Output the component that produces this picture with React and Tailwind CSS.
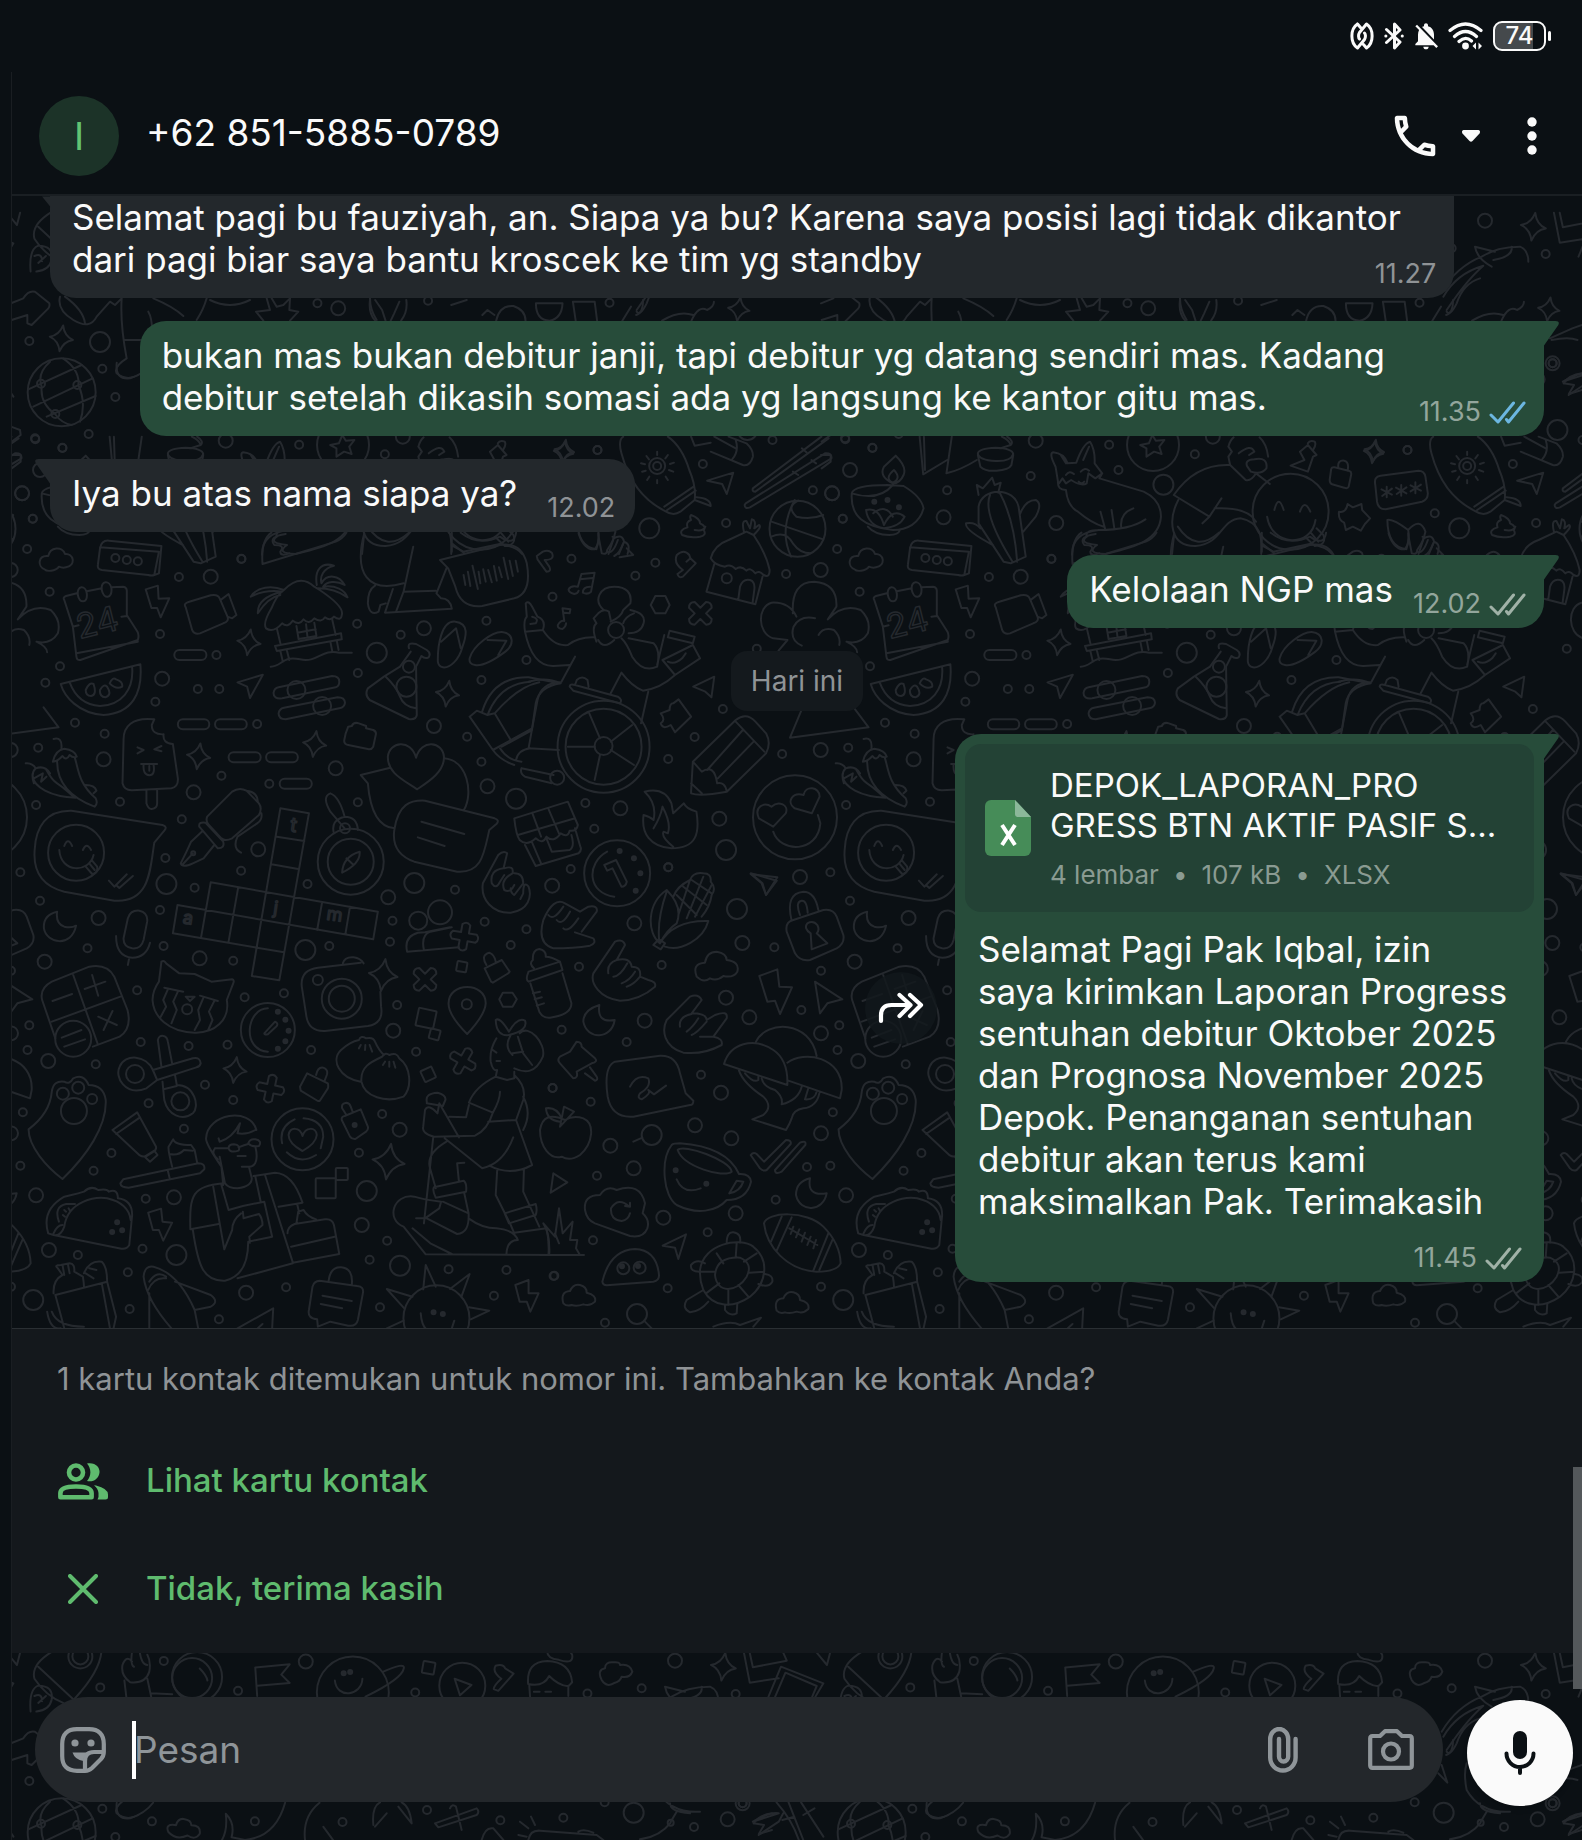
import React from "react";
import { MdNotificationsOff, MdOutlineCall } from "react-icons/md";

/* ---------- Wallpaper doodles ---------- */

// Each sheet holds drawings on its own grid: page = origin + point / scale.
const SHEETS = [
  {
    ox: 0, oy: 520, sx: 2.8, sy: 3,
    small: [[76,87],[139,215],[501,171],[676,117],[448,342],[606,405],[1000,311],[1122,344],[1362,302],[1547,230],[1474,420],[1348,480],[1002,459],[168,439],[127,488],[435,545],[554,507],[614,507],[210,608],[293,641],[107,683],[720,612],[1308,650],[1348,725],[620,767],[754,791],[1002,847],[101,855],[336,845],[509,898],[57,1057],[463,1014],[675,1052],[861,1092],[545,1103],[112,1142],[448,1170],[1274,1109]],
    mid: [[590,170],[290,718],[542,817],[454,476],[1187,325],[1215,618],[940,745],[1365,799],[723,988],[1087,1132]],
    large: [[1055,398],[1445,836],[466,1092],[1160,1089]],
    rings: [[323,114,4],[355,120,4],[386,124,4],[1145,440,6],[1138,500,10],[830,510,9],[902,558,9],[213,998,28],[982,1025,33],[982,1025,23],[966,925,5],[541,1000,2]],
    stars: [[697,367,13],[1253,521,13],[881,672,13],[556,709,13]],
    pills: [[488,578,405],[498,586,613],[602,691,613],[640,730,712],[745,834,712],[783,873,791]],
    texts: [[280,342,"24",34,-14],[820,935,"t",20,8],[770,1182,"j",18,8],[524,1212,"a",18,8],[935,1202,"m",18,8]],
    d: "M125 148C105 140 105 105 135 108C140 80 175 78 182 102C205 98 215 135 185 142C175 145 165 140 165 140C155 155 130 155 125 148ZM280 82L445 95L432 165Q425 168 415 165L285 150Q272 148 274 135L280 85Q284 60 305 62L452 78L445 160L432 165M180 240Q175 232 185 228L215 220M243 214L285 205M312 202L345 200Q355 202 355 212L355 285L385 335Q390 345 386 360L225 420Q215 422 214 410L204 320L180 240M204 320L220 316M340 290L355 288M214 400L386 365M218 225C214 195 240 195 243 220C246 250 222 252 218 225M285 210C281 180 308 180 312 205C315 238 290 238 285 210M408 208L442 197L444 236L474 235L450 292L440 264L424 264ZM520 262Q512 250 530 245L590 226Q610 222 615 235L637 290Q642 305 625 310L560 340Q545 345 538 330ZM620 238L640 222L662 285L650 295L637 290M665 487L736 464L700 534L692 500ZM745 325Q735 310 760 265Q775 225 795 210Q840 160 880 200L895 210Q965 260 957 285Q955 305 935 290Q925 305 910 292Q900 310 880 295Q865 315 850 298Q838 318 820 302Q805 325 790 310Q765 340 745 325M775 325L785 370M930 298L940 345M770 378L955 340L957 358L775 393ZM785 393L792 425M803 390L810 420M925 365L930 392M943 362L948 390M758 440C790 440 790 405 840 418C890 430 900 385 950 398L985 398M830 318L836 357L886 348L880 308M833 338L884 328M857 313L861 352M887 195C880 150 900 125 935 137C905 145 895 170 900 190C915 160 950 165 965 195C940 180 915 185 905 200C940 195 965 210 973 232C950 215 920 205 890 205M795 210C760 195 720 200 702 230C730 215 760 210 790 215C750 225 720 245 722 280C740 250 760 230 785 225M735 132Q730 60 760 38M735 132L940 65Q960 55 970 38M800 42Q750 50 768 75Q800 75 785 95Q785 110 810 100M1020 40C990 160 1030 220 1130 190M1157 80L1130 215L1220 212M1030 20Q1080 100 1145 38M1130 215L1110 272M1100 207L1078 278L1265 266Q1260 235 1235 235L1222 220L1250 145M1050 197Q1030 210 1030 250Q1035 290 1060 275L1065 255L1080 250M1265 38L1265 95M1265 70L1300 100M1290 38Q1340 80 1400 50Q1440 80 1445 38M1232 120L1400 75Q1460 65 1475 130Q1490 220 1440 235L1350 258Q1290 265 1275 200L1255 145ZM1298 165L1303 195M1310 155L1317 198M1323 137L1338 207M1340 155L1345 190M1353 148L1360 185M1367 150L1377 187M1383 138L1391 182M1397 142L1405 172M1410 113L1423 177M1427 122L1436 168M1444 122L1450 155M1505 118L1530 155Q1545 155 1538 140L1525 120Q1555 120 1545 98Q1535 88 1520 95L1503 108ZM1145 385Q1140 365 1165 372L1195 390Q1208 400 1200 412Q1190 418 1180 408L1165 440L1167 585Q1165 600 1145 597L1035 540Q1020 525 1030 505L1075 470L1120 440L1150 395M1080 470Q1110 500 1120 530Q1130 560 1165 565M1226 425C1225 380 1235 300 1275 305C1315 310 1305 350 1295 380C1285 420 1260 445 1240 442Q1228 440 1226 425ZM1235 365L1277 325L1290 385M1315 415C1325 375 1380 335 1405 336C1440 340 1440 375 1415 395C1390 415 1355 440 1330 435Q1312 432 1315 415ZM1365 360L1418 362L1395 405M170 492L393 433C400 520 370 580 290 585C220 580 180 530 170 492ZM195 487C210 530 240 555 280 558C340 555 375 510 370 442M240 510Q250 485 262 492Q272 525 255 528Q240 528 240 510ZM280 510Q290 490 300 500Q315 525 295 532Q278 530 280 510ZM307 490Q315 470 325 478Q345 485 342 500Q325 510 307 490ZM780 502L930 468Q950 468 950 485Q950 498 940 502L790 535Q765 538 766 518Q768 505 780 502ZM795 563L945 532Q965 532 966 548Q965 562 950 565L800 598Q780 598 780 580Q782 566 795 563ZM432 598C370 590 345 620 346 660L343 790Q348 812 370 811L480 805Q500 800 498 775L484 672Q455 670 458 643Q425 645 425 615ZM410 812L410 850Q415 868 425 867Q440 866 440 850L440 808M385 682L402 690L385 700M452 678L432 688L452 694M395 732L440 732M402 735Q400 765 418 766Q435 765 430 735M418 738L418 752M150 657Q175 650 172 685M148 725Q155 690 180 686Q210 690 215 710Q205 715 195 705Q185 725 175 708Q160 725 148 725ZM160 725C160 780 190 830 265 860Q275 850 268 835C220 790 220 750 210 715M72 730Q90 728 100 745Q125 735 140 760M100 745Q85 760 95 790M130 750Q145 780 160 790C190 810 200 830 212 833C140 830 95 800 92 770M95 775L120 760L115 785L130 770M240 795Q265 795 270 812L262 820M968 640L975 620L985 618Q990 605 1005 610L1025 618L1025 625L1045 630Q1055 635 1052 645L1045 680Q1040 690 1030 687L975 675Q962 672 964 660ZM200 872L455 915Q470 920 460 932L432 968C420 1050 420 1150 320 1142L180 1115Q90 1090 97 990C100 920 130 870 200 872ZM180 978Q190 950 202 978M232 990Q242 965 255 990M166 990C170 1060 250 1060 262 1005M240 1040L258 1062Q275 1060 272 1040L258 1022M250 1030L265 1050M305 1082L320 1100L355 1063M328 1098L334 1104L372 1068M580 890L650 815Q670 800 690 812L725 850Q735 865 725 885L650 955Q630 965 620 955L585 915Q575 905 580 890ZM690 812Q720 815 722 845M732 880Q735 900 720 910L665 950Q650 985 675 998M558 920Q555 905 575 908L625 965Q630 985 610 985ZM565 935L535 965Q525 990 506 1030Q510 1045 540 1030L570 1015L600 975M510 1035L540 1000M785 865L865 880L782 1381L705 1368ZM775 950L852 963M760 1033L835 1047M497 1155L1045 1258L1058 1175L590 1087L563 1252M497 1155L484 1240L795 1297M667 1102L640 1265M902 1146L888 1230M980 1160L967 1243M935 940Q925 900 965 890Q1000 890 1002 930M965 925L925 875Q900 830 925 820Q950 830 965 890M958 1058Q960 1010 1007 995Q1010 1030 958 1058ZM970 1015L990 1035M1168 808C1130 780 1085 760 1086 710C1090 665 1150 655 1165 713C1180 655 1240 665 1243 710C1245 755 1200 785 1168 808ZM1090 744L1010 765L1030 790Q1040 920 1105 925M1243 715C1310 720 1325 820 1300 868M1190 842L1385 895Q1400 900 1390 912L1370 930C1355 1000 1350 1060 1280 1055L1160 1025Q1095 1000 1104 930C1115 850 1150 840 1190 842ZM1180 905L1300 942M1170 952L1245 978M1420 1000Q1410 990 1395 1005L1352 1090C1345 1140 1380 1180 1430 1178C1480 1170 1490 1130 1480 1100Q1465 1080 1465 1120L1457 1137M1420 1000L1410 1045Q1370 1050 1377 1090Q1390 1110 1400 1085L1412 1065M1412 1045Q1440 1035 1435 1060Q1400 1080 1412 1110Q1430 1120 1440 1095M1440 1060Q1465 1060 1465 1090L1440 1125Q1430 1120 1430 1105M1350 575Q1380 470 1480 472L1568 490M1365 585Q1400 490 1485 485M1315 590L1335 572L1365 585L1385 580Q1450 500 1510 487M1315 590L1380 690L1490 625L1505 540Q1515 490 1568 487M1385 580L1430 660M1380 690Q1400 720 1440 735",
  },
  {
    ox: 0, oy: 900, sx: 2.8, sy: 3,
    small: [[245,145],[458,138],[653,182],[922,138],[1099,62],[1092,125],[1357,65],[1474,88],[1430,135],[384,271],[82,376],[77,450],[268,493],[394,426],[528,438],[637,434],[685,292],[795,280],[871,450],[1112,315],[1165,455],[574,554],[416,610],[653,600],[64,637],[515,686],[312,759],[57,797],[262,812],[1070,642],[1005,758],[408,896],[218,1065],[399,1046],[358,1117],[363,1227],[801,1162],[613,1258],[1035,1079],[1084,1022],[1256,1108],[1064,1222],[1383,1187],[1418,1110],[1547,564],[1550,1128]],
    mid: [[276,54],[125,185],[559,175],[135,483],[1101,392],[1119,689],[101,886],[487,892],[1013,975],[137,1050],[689,1178]],
    large: [[855,150],[494,1065],[1120,1097],[93,1200],[1027,873]],
    rings: [[205,416,18],[524,328,5],[750,390,27],[957,296,20],[957,296,13],[890,240,5],[1171,62,9],[1232,37,12],[1307,313,5],[378,522,9],[505,604,9],[207,633,13],[176,581,6],[219,563,6],[258,597,5],[847,718,31],[1222,1255,33]],
    dots: [[778,335],[799,359],[808,392],[799,424],[778,446],[993,675],[328,967],[342,991],[314,996],[1214,1237],[1240,1242]],
    stars: [[1073,225,16],[1088,785,18],[658,510,13]],
    crosses: [[1300,110,10],[1190,238,45],[757,566,12],[1296,483,30]],
    squares: [[1293,200,5,10],[1193,355,9,12],[1217,403,5,15],[1199,523,6,-25],[912,865,10,0],[957,822,6,0]],
    d: "M160 35Q120 45 123 85C130 130 200 145 213 77Q200 85 180 80Q155 70 160 35ZM358 55Q365 30 390 32Q415 38 412 65L402 120Q395 148 370 145Q345 140 346 115ZM325 108Q325 170 370 173Q410 172 420 128M362 173L358 195M118 300Q110 265 145 245L250 200Q300 190 320 230L357 330Q370 385 335 410L260 440M118 300L155 415M205 225L273 430M145 365L337 290M147 303L202 282M237 267L295 245M258 225L275 287M275 350L327 375M315 333L290 390M173 413L228 390M180 440L238 418M452 185Q460 180 465 190L502 220L545 222L592 245L650 238Q657 240 653 250L635 300C645 360 600 400 545 398C470 395 430 350 427 300Q428 270 445 245ZM460 263L513 275M560 287L610 303M470 268L457 300L465 320L450 350M498 275L485 305L495 330L480 370M570 292L555 330L560 360L545 390M600 303L585 335L595 360L583 390M520 290L545 290L532 303ZM750 325C690 325 675 450 750 455M740 400L770 365Q780 370 775 378L750 403Q740 405 740 400ZM845 260Q840 210 890 203L1010 188M845 260L858 350Q865 395 910 393L1030 378Q1075 370 1067 320L1065 275M960 190Q965 170 990 172Q1010 175 1018 190M1140 155Q1130 110 1170 98L1190 97L1260 82M1140 155L1285 142M1187 150Q1178 105 1205 95L1265 82M1357 205L1405 180L1427 215Q1425 220 1420 222L1380 248L1375 245ZM1362 195Q1345 165 1370 158Q1385 165 1388 185M840 560L860 520L918 550Q920 560 918 565L895 603L890 603L842 572ZM885 525Q890 500 905 503Q920 508 915 525L908 545M957 660Q955 650 965 648L1010 628L1030 680Q1032 690 1025 695L995 717Q985 718 980 710ZM970 645L958 625Q955 610 970 608Q980 610 982 620L988 637M1308 402Q1255 345 1256 310C1256 245 1360 245 1360 310Q1358 345 1308 402ZM1398 298L1408 278L1435 278L1447 298L1435 320L1408 320ZM1480 215Q1470 240 1480 245L1575 210M1480 215L1568 185M1495 205Q1480 190 1492 180Q1490 150 1510 147Q1530 152 1528 170Q1545 170 1568 185L1575 210M1485 250L1510 335Q1520 355 1540 353Q1600 345 1600 310L1575 220M1492 280L1512 275M1497 298L1517 292M1503 317L1523 310M440 540L410 565C350 590 320 530 335 500C350 460 410 465 428 510L540 475Q560 470 562 490Q560 500 550 502L440 540M428 510L440 540M442 420Q445 405 458 408Q468 410 470 425L482 490M442 420L452 500M490 525L495 555C545 555 560 620 540 640C510 665 470 645 460 600L455 545M458 568L495 558M1010 545C950 535 925 480 955 450Q980 425 1005 420Q1010 405 1025 415Q1045 410 1050 425Q1060 450 1075 465M1070 470Q1080 455 1090 465Q1110 455 1118 475C1150 500 1155 560 1130 590C1080 610 1020 590 1012 545C1008 500 1040 485 1070 470ZM1010 435L1005 445M1023 435L1022 450M1035 435L1042 455M1078 485L1072 495M1090 485L1090 500M1102 485L1107 503M80 688Q140 640 145 575Q150 540 180 545Q195 555 205 535Q235 520 248 555Q290 555 296 600C300 680 240 770 175 837C130 800 80 740 80 688ZM315 690L384 637L437 740Q438 750 430 755L408 770Q395 770 390 765ZM325 702L392 652M405 770L432 752L441 765L420 785ZM345 838L555 790Q575 790 572 808L560 820L360 863Q338 862 337 850ZM470 812L475 835M482 800Q470 750 472 740L485 718Q490 735 535 735L545 750L552 788M475 762Q500 768 515 750L540 752M847 753Q808 730 808 705C812 680 840 680 847 708C855 680 885 680 887 705Q885 730 847 753ZM825 658Q780 680 790 730M850 655Q905 660 905 710L898 745M803 757Q840 795 885 765M135 1000Q115 930 180 890L200 885Q220 880 235 875Q255 855 275 870Q300 865 305 875Q330 865 330 895Q370 900 370 945L362 1035Q355 1048 340 1046L150 1005Q170 1010 180 980C190 900 270 890 300 895Q360 910 366 960M150 1005L135 1000M165 965Q150 920 185 912L210 912M150 1000Q160 975 175 975M180 930L185 935M176 945L182 950M192 925L196 932M415 938L451 926L455 965L482 968L457 1022L445 990L428 990ZM625 855L620 800Q575 730 577 715C580 640 700 620 718 690L715 690Q690 705 665 700L672 670Q650 715 615 725L612 715M602 745Q590 760 610 778M615 770L630 850Q640 865 665 865Q705 860 705 835L697 800L677 800M697 800C720 800 722 770 715 740M602 745L640 745M640 745Q640 733 655 733Q675 735 668 752Q645 760 640 745ZM695 730Q700 715 715 718Q735 722 725 738Q705 742 695 730M668 742Q685 735 695 732M665 768L688 768M625 850C540 860 530 880 533 988L612 972M540 990C555 1100 570 1145 630 1142C680 1130 695 1080 695 1025L762 1010L740 905L680 918L640 930L620 855M597 860L628 1048L650 990Q650 960 675 940M710 828L770 818Q820 820 847 908L780 920M715 830L730 905M742 825L820 1088L950 1062L935 975Q930 955 910 958L825 972Q805 980 805 1000M815 1040L937 1010M665 1135L820 1090M680 935L682 955L725 942Q735 955 735 975L698 1010L700 1028M830 970L835 935L850 930Q860 950 885 958M832 912L838 940M1455 400C1480 370 1530 430 1520 470C1500 520 1470 520 1440 505M1425 405Q1390 410 1388 360Q1400 350 1425 395Q1450 350 1470 362Q1480 390 1425 405M1390 415Q1370 450 1374 485Q1380 515 1392 510L1388 530L1420 540L1440 535L1440 515M1430 405Q1410 440 1435 465M1450 410L1465 460L1490 495M1465 455L1435 460M1380 450L1390 458M1390 483L1400 483M1388 530Q1330 560 1313 608L1380 638Q1400 600 1400 575M1440 525Q1475 560 1465 600L1445 660L1367 665M1465 590Q1490 640 1465 690M1445 660L1490 795Q1430 830 1370 797M1313 615L1305 652L1258 650M1380 638Q1365 690 1330 707L1215 710Q1180 700 1185 680L1190 630Q1200 610 1225 640L1230 610L1285 712M1195 605Q1190 580 1225 578Q1250 585 1247 600L1240 618L1195 610ZM1245 715L1350 805Q1410 790 1437 712M1250 725Q1195 760 1203 800L1220 865M1280 790L1285 845M1215 862Q1210 870 1220 893L1305 875Q1308 850 1298 842ZM1213 712L1187 970M1280 790L1300 788M1240 905L1312 940Q1315 1000 1280 1002L1195 955L1165 955M1300 880L1312 940M1190 955L1230 925L1235 905Q1190 900 1160 890C1100 880 1080 960 1130 980L1192 1063L1568 1065M1155 985L1205 1030L1265 1062M1312 955Q1350 985 1390 985Q1440 990 1450 1020Q1420 1020 1418 1062M1392 812L1388 885L1430 975L1440 1000M1467 808L1465 875L1510 980M1413 940L1500 912Q1505 930 1500 945L1425 970ZM1440 998L1530 985Q1538 1020 1536 1062M150 1180Q148 1140 175 1125L162 1105Q150 1095 170 1095L195 1090Q210 1090 208 1115L232 1130Q235 1150 235 1160M175 1095L180 1125M190 1092L195 1120M155 1185L300 1145M155 1185L180 1285M285 1150L308 1285M300 1145L325 1250L318 1285M235 1120Q250 1080 285 1085Q300 1100 300 1145M250 1105L270 1110M240 1120L262 1135M132 1235Q140 1290 170 1285M145 1235Q160 1280 235 1280M402 1130Q405 1095 430 1100Q500 1120 545 1230L555 1285M402 1130Q410 1200 480 1285M415 1170Q430 1130 465 1135M418 1145Q440 1110 465 1130M490 1145L590 1185Q615 1205 590 1220L545 1230M418 1180L418 1285M665 1285L765 1225L762 1285M722 1285L735 1272M875 1160Q880 1140 900 1143L1000 1158Q1020 1160 1016 1180L1002 1260Q998 1280 975 1277L925 1265L890 1280L888 1258Q860 1255 865 1230ZM920 1143Q925 1100 955 1102Q990 1105 985 1155M903 1187L985 1203M898 1212L958 1225M1185 1168L1192 1095L1220 1160M1260 1167L1315 1122L1292 1190M1313 1222L1370 1232L1318 1258M1155 1190L1083 1167L1132 1225M1130 1262L1083 1285M1178 1240Q1180 1275 1195 1290M1272 1262L1265 1285M1443 1155L1480 1140L1480 1180L1508 1180L1485 1235L1475 1205L1455 1205Z",
  },
  {
    ox: 500, oy: 420, sx: 2.8, sy: 3,
    small: [[273,90],[568,132],[763,60],[876,211],[960,296],[1043,84],[1252,211],[1486,168],[967,58],[200,416],[435,428],[379,467],[633,309],[801,462],[719,686],[624,867],[545,951],[471,1017],[790,1002],[239,1149],[264,1226],[198,1347],[471,1342]],
    mid: [[930,220],[980,150],[1242,292],[1500,62],[898,450],[337,1165],[614,1196],[146,1397],[898,990]],
    large: [[418,325],[633,1290]],
    rings: [[440,138,8],[440,138,4],[833,326,28],[635,475,5],[325,630,8],[290,980,46],[290,980,38],[290,978,9],[160,1073,7],[826,1192,42],[328,1360,33]],
    dots: [[1048,245],[1085,240],[1117,262],[335,1293],[375,1315],[393,1360],[380,1412]],
    stars: [[180,92,11]],
    crosses: [[561,580,45]],
    d: "M345 50Q330 60 340 100C360 180 400 240 460 272Q485 290 505 275L545 240Q550 200 530 150Q510 80 470 50M460 260L542 200M468 270L548 212M550 232Q590 235 590 258L545 240M440 95L440 105M410 108L417 118M395 130L406 133M398 155L408 152M412 180L418 170M440 190L440 180M470 180L464 170M485 155L473 150M487 128L476 132M470 105L463 115M535 50L545 77L590 68M600 50L660 85M590 95L680 135Q700 140 708 110Q710 90 690 70L640 50M650 118Q670 95 660 60M580 182L653 158L635 222L622 192ZM708 205L900 50M715 215L920 55M708 205Q705 215 715 215M688 250L910 100Q930 98 928 115L700 262Q685 268 685 255ZM845 85L858 97M820 155L835 165M872 120L885 130M760 305L905 358M825 240Q780 330 815 410M835 242Q800 260 830 290Q870 300 905 285M760 350Q800 330 820 370Q840 400 870 400M985 220Q990 195 1085 195L1130 198Q1180 230 1186 265C1175 310 1140 330 1100 330C1020 320 980 290 985 220M985 220Q1060 245 1100 195M1100 190Q1060 170 1075 140L1108 107Q1140 140 1130 165Q1120 190 1100 190ZM1100 188Q1075 175 1103 150Q1125 175 1100 188M1025 270Q1060 260 1075 315Q1100 260 1133 290Q1120 320 1075 325Q1030 315 1025 270M1045 280Q1080 250 1100 290M1030 320Q1050 345 1090 345Q1115 345 1120 330M1175 50L1185 163L1252 120M1187 50L1190 150M1265 50L1250 160Q1290 150 1335 120M1405 50Q1425 60 1430 75L1400 85M1420 50Q1440 65 1430 75M1338 100Q1340 85 1388 83Q1435 85 1437 102Q1430 125 1388 123Q1340 120 1338 100ZM1338 105L1345 140Q1360 155 1390 152Q1425 150 1432 135L1437 105M1340 260C1350 200 1440 200 1452 260L1472 410L1430 430L1410 425L1340 310ZM1372 225Q1350 280 1435 425M1400 220Q1440 300 1448 425M1340 225L1335 195L1352 205L1378 173L1385 195L1402 188L1395 218M1305 310Q1300 330 1380 375M1305 310Q1330 305 1345 325M1455 285Q1470 240 1500 240Q1520 250 1500 290L1465 335M510 345Q500 330 525 322Q520 305 535 300Q530 290 535 285Q560 295 560 310Q580 320 570 330Q580 345 560 350Q530 355 510 345ZM545 330Q570 335 575 320M590 415Q600 375 640 360L690 335L710 345Q745 400 755 450Q755 475 738 465Q725 450 715 460Q700 440 690 452Q675 435 660 447Q645 430 630 440Q600 435 590 415ZM600 432L578 515L715 553L735 470M667 540L672 500Q680 475 700 480Q715 485 712 510L707 550M683 335Q675 300 690 303L700 325L705 298Q718 300 712 325L725 315Q735 320 710 345M220 340Q235 390 265 388Q280 370 275 340M275 345L285 400Q300 405 300 390Q325 350 315 350M300 395Q315 405 330 360M320 408Q335 400 345 370M335 412L373 405L355 385M497 462Q500 475 512 470L548 430L533 415L522 425M512 450L497 462M512 450Q485 430 495 405Q515 385 530 405L533 415M220 512Q218 520 208 522Q192 518 192 508Q198 495 218 500L228 462L265 458L255 515Q245 525 232 518Q232 500 252 500M224 478L260 474M185 610Q185 620 175 627Q160 625 162 615Q170 600 180 603L175 565L197 568L195 580L180 578M422 555L435 528L463 528L475 555L463 580L435 580ZM72 550Q80 540 90 560L105 590Q130 600 120 630L70 635Q65 600 75 590ZM70 635Q90 740 150 738L195 735M120 630Q150 680 190 675Q220 650 265 652M90 590Q110 595 100 610L85 612M270 665Q255 620 270 610L262 595L275 580Q290 565 305 575L310 600M290 570C260 540 280 500 320 500C355 500 370 520 365 550M365 570Q410 580 402 610Q395 640 360 640M310 605Q340 590 345 570L365 550M345 610Q350 590 375 580M275 660Q290 690 320 660M360 655L430 670Q450 690 440 740Q400 760 370 710Q355 670 340 655M210 710L172 785M310 820L340 758Q370 800 400 812Q450 805 490 765M440 735L460 645M475 632L545 650L540 670L470 652ZM455 720L490 765L560 715L540 675ZM470 725Q490 735 510 715L520 700M415 815L395 910M190 980L265 980M250 880L280 955M370 915L310 965M310 990L375 1035M280 1005L265 1080M90 925L80 985L165 990M5 980L90 930M0 985Q20 1020 60 1025M45 1020Q50 990 85 985M60 1045L150 1065M60 1045Q55 1060 70 1070L145 1090M90 925L100 850Q110 800 170 790Q130 770 80 785M195 800Q195 790 210 795L330 830Q345 840 335 850L205 812ZM210 795L215 780Q230 765 245 780L248 800M450 880L475 870Q475 850 485 850L500 838L535 890L490 937L478 915Q455 930 450 910Q465 900 450 880ZM535 1115L540 1025L660 900Q690 875 715 905L745 940Q760 970 745 1000L635 1115Q560 1130 535 1120ZM540 1025L565 1055Q600 1030 608 1090Q630 1085 635 1115M535 1090L565 1120M660 905L740 995M580 1050L680 930M610 1075L710 965M820 580Q815 485 880 485Q945 490 942 560L918 598M830 590Q810 545 760 548C720 560 720 640 765 655L805 660L780 692M918 598Q960 550 1010 570Q1040 600 1030 640Q1010 675 970 665Q1000 680 1000 697M845 677Q810 660 822 620Q840 585 882 595M892 645Q905 620 935 630Q955 650 950 675M845 868L812 953L1032 922L990 862M541 800L600 770L592 832L575 815ZM405 1115Q460 1100 480 1150L485 1180Q505 1160 515 1150Q520 1165 550 1175C560 1240 550 1285 480 1285C420 1280 395 1240 402 1185Q420 1190 430 1200Q440 1150 405 1115ZM485 1280Q450 1250 458 1235L470 1240Q480 1210 455 1160Q450 1190 430 1225M765 1235C785 1300 890 1300 897 1210L890 1185M765 1220L725 1195C710 1160 740 1145 760 1160C780 1140 810 1155 800 1180ZM873 1180L825 1165C800 1145 820 1115 850 1125C855 1095 895 1100 895 1130ZM40 1195L190 1145L218 1215Q215 1235 195 1232Q190 1255 170 1240Q150 1270 130 1250Q120 1275 100 1255Q75 1280 55 1260Q45 1245 40 1195ZM90 1178L115 1250M135 1165L165 1240M50 1245L210 1195M70 1275L100 1338L220 1300Q230 1290 225 1280L210 1225M90 1268L115 1330M130 1255L145 1295L195 1290Q210 1280 200 1245M300 1295C240 1330 245 1420 320 1430M292 1335L325 1320L355 1385Q352 1400 340 1400L315 1345L300 1352ZM702 1360L775 1382L745 1425L735 1390Z",
  },
  {
    ox: 540, oy: 860, sx: 3, sy: 3,
    small: [[385,22],[703,262],[843,332],[117,320],[365,315],[65,509],[260,546],[483,644],[784,450],[38,684],[152,725],[171,947],[801,921],[707,1019],[503,1117],[159,1141],[43,1247],[383,1285],[843,1280],[195,1388]],
    mid: [[283,190],[607,249],[314,482],[558,413],[628,472],[843,520],[543,698],[465,796],[574,835],[211,857],[281,925],[370,1073],[587,1060],[843,820],[780,51]],
    large: [[591,147],[335,825],[291,1362]],
    rings: [[250,1225,6],[299,1223,6]],
    dots: [[407,931],[499,971],[246,1219],[294,1218]],
    d: "M360 250C320 220 320 130 380 90Q430 140 410 190Q380 210 360 250ZM380 95Q350 180 358 245M360 250Q400 180 505 183C490 240 420 275 375 260M340 255L357 237L375 250L362 268ZM400 110Q410 80 450 60Q460 35 490 40Q515 40 512 65Q530 85 515 105Q510 140 485 170M410 105L470 165M430 80L500 135M455 60L515 100M415 165L450 60M440 175L490 50M465 170L515 75M10 180Q-10 250 40 265Q100 265 150 257Q170 250 160 235L105 217M10 180Q40 110 75 130L120 155L145 140Q175 135 170 155L125 215M25 165Q40 185 70 140M50 180Q65 200 90 155M70 205Q85 220 115 175M225 245Q250 235 255 255L230 300Q270 290 275 320Q305 320 300 350L325 360Q350 365 345 380Q300 420 240 422C180 415 150 370 160 340ZM205 340Q200 310 230 300M220 350Q240 350 262 310M245 370Q270 360 285 335M260 380Q280 375 300 350M450 410Q475 400 485 420L455 460Q500 460 500 480L525 465Q565 450 560 475L520 530Q550 535 545 555Q490 585 430 578C370 560 365 510 380 480ZM420 500Q415 470 455 462M440 515Q460 500 475 475M455 525Q470 520 500 485M480 530L520 530M470 350Q455 310 495 308Q500 275 530 275Q560 280 560 300Q600 305 592 335Q580 355 550 348Q530 365 510 355Q490 370 470 350ZM740 215Q735 185 760 180L850 150Q880 145 890 170L910 225Q915 250 890 265L810 300Q780 305 765 280ZM755 182Q735 100 790 95Q825 95 835 150M780 165Q765 125 785 122Q800 120 803 158M815 268L812 220Q790 205 802 190Q820 180 832 195Q840 210 830 220L862 250ZM658 348L712 328L718 380L756 382L720 462L705 422L682 425ZM825 365L907 418L862 430L840 460ZM178 435Q130 450 130 485C140 540 215 540 224 480Q170 490 178 435ZM810 955Q768 965 768 1005C780 1060 850 1055 860 1000Q800 1010 810 955ZM60 590Q50 600 60 610L100 655Q115 655 110 635L155 610Q175 605 165 595L125 560Q125 545 110 545L90 575ZM135 640L165 662Q175 660 170 650L150 622M225 605L360 587Q410 585 420 640L437 700L460 722Q460 735 450 735L280 770Q215 775 203 710Q190 620 225 605ZM270 680Q290 640 325 655Q335 680 300 700Q290 715 305 718Q335 700 325 690L342 703L378 677M552 612C570 550 640 530 700 570Q745 600 742 675ZM648 545C680 480 810 480 830 588M742 608C790 570 910 590 905 690L900 715L745 662M597 632Q610 670 670 710Q700 740 670 765L637 778L738 810Q750 790 755 775Q760 750 790 745Q830 740 838 700M615 640Q640 670 655 660L655 648M665 655Q670 680 705 690Q730 710 725 733Q775 720 785 680M805 685L795 718Q825 720 830 695M75 780Q10 750 0 810C0 860 30 900 65 890Q90 905 120 885C160 850 165 790 130 775Q100 765 75 780M60 800L72 740L102 755ZM60 785Q20 780 18 745Q50 740 65 775M395 855C360 900 370 1010 410 1035C470 1065 530 1055 560 1020Q620 1020 633 965Q630 940 597 942Q560 860 420 850Q400 850 395 855ZM413 870C430 850 570 900 575 935C550 955 430 920 413 870ZM568 1000L590 962L610 965Q600 995 568 1000M410 958Q430 1005 482 985M307 833L280 845M632 885Q640 875 650 882L672 905L738 840Q755 840 752 852L680 930Q670 935 660 925ZM705 930L780 848Q800 840 796 855L725 935Q705 945 705 930ZM135 1050Q130 1005 180 1005Q200 975 230 990Q300 965 315 1030L308 1060Q330 1080 322 1105Q310 1135 270 1128L165 1090Q140 1080 135 1050ZM268 1040Q235 1010 213 1045Q210 1080 245 1083Q265 1080 270 1060M255 1038L270 1040L270 1028M40 940L82 967L32 998ZM0 1185L132 1185M28 1180Q30 1120 10 1090L45 1130L57 1045L68 1120L98 1085L90 1140L112 1140L108 1165L118 1182M57 1150L45 1120M368 1157L438 1123L415 1197L405 1163ZM187 1265Q210 1170 285 1167Q350 1170 357 1245Q358 1262 340 1265L200 1276Q188 1275 187 1265ZM70 1330Q60 1295 90 1293Q100 1270 120 1275Q140 1280 140 1298Q170 1305 165 1325Q150 1340 130 1333Q110 1340 95 1335Q80 1340 70 1330ZM710 1352Q700 1317 730 1315Q740 1292 760 1297Q780 1302 780 1320Q810 1327 805 1347Q790 1362 770 1355Q750 1362 735 1357Q720 1362 710 1352ZM480 1230C490 1150 600 1130 640 1160C690 1200 680 1270 630 1310C580 1345 520 1345 490 1290Q478 1260 480 1230ZM525 1245Q530 1190 600 1193Q640 1210 620 1250C590 1300 530 1300 525 1245ZM530 1180L550 1210M590 1150L587 1192M650 1180L612 1205M672 1235L628 1238M595 1275L625 1310M565 1288L565 1335M538 1270L498 1300M525 1235L480 1235M560 1150Q560 1115 580 1117Q605 1120 600 1148M478 1235Q450 1235 453 1215Q470 1195 495 1210M675 1242Q700 1245 697 1265Q685 1285 655 1272M490 1290L440 1320Q425 1345 450 1357Q480 1355 505 1325M555 1335L555 1350Q570 1370 590 1360L592 1330M672 1090C680 1055 800 1050 850 1100Q900 1150 902 1210Q890 1235 830 1235C740 1230 680 1160 672 1090ZM693 1145L725 1070M710 1172L755 1072M820 1232L865 1120M838 1230L878 1138M748 1105L832 1155M760 1100L752 1122M778 1108L768 1132M795 1118L785 1145M812 1130L802 1155M828 1140L820 1165M312 1382L335 1405M520 1400Q570 1380 600 1395L663 1373L640 1400M632 42L712 52L678 105L665 70Z",
  },
  {
    ox: 230, oy: 300, sx: 2.893, sy: 3,
    small: [[200,434],[227,510],[448,463],[1063,450],[1142,640],[33,776],[253,10],[573,2],[1098,8]],
    mid: [[47,669],[500,410],[313,25],[1483,190]],
    large: [[357,554],[1497,390]],
    rings: [[327,435,26],[725,635,38]],
    stars: [[965,457,11],[1472,28,12]],
    d: "M325 405L335 422L360 420L345 440L352 462L330 455L308 470L308 445L290 435L315 430ZM75 570Q50 570 52 545L45 500Q25 460 38 457Q70 460 80 490L105 488Q125 430 145 425Q160 450 158 490L180 520L172 535L300 575Q350 600 350 650C345 720 280 740 190 762M75 570Q80 620 110 635Q150 670 185 680M75 490L60 465M125 480L142 440M55 550L65 535L75 550L90 540Q120 560 135 550L140 520L160 535L180 520M190 762Q130 760 165 735Q110 730 135 710Q130 690 170 690Q260 690 305 658M170 690Q90 700 93 765M175 635L188 685M207 630L215 685M235 682Q230 640 270 625M75 525Q85 510 98 522M118 515Q130 500 142 512M112 545Q120 555 128 545M545 440Q550 420 560 412M545 440L555 455L545 470L550 495L595 540Q610 545 625 520M550 495Q450 490 387 585L490 650L525 595M400 600C370 660 375 740 450 738C530 730 520 660 580 655C650 670 640 730 640 762M387 712L382 762M490 650L470 670M505 625Q600 620 625 665M575 460Q610 430 620 455L605 465M600 500Q590 480 620 478Q660 470 655 505Q640 525 610 515ZM660 470Q655 430 635 412M625 520L665 552M640 735L675 755L780 732Q830 740 845 762M678 630Q690 580 705 630M752 635Q765 595 782 635M657 650C670 740 785 745 797 660M768 712L795 738Q830 735 820 705L800 685M785 700L805 725M725 497L765 480L752 455L775 435L800 465L790 470L775 515ZM775 430Q780 420 795 425Q800 435 790 450M842 510Q843 500 852 502L895 513Q902 515 900 525L893 560Q890 567 880 563L845 553Q838 550 838 540ZM863 502Q860 480 880 482Q895 485 890 512M970 555Q965 530 985 527L1095 512Q1112 512 1115 530L1122 580Q1122 600 1105 605L1000 628Q978 628 975 605ZM1003 560L1003 592M988 568L1018 584M1018 566L990 588M1045 555L1045 587M1030 563L1060 580M1060 562L1032 582M1086 547L1086 580M1072 556L1102 572M1102 554L1072 574M865 635Q885 640 890 612L905 622L930 612L932 630L955 655L940 672L928 692L905 680L885 690L880 668Q862 660 865 635ZM1005 660Q1020 655 1065 690Q1100 650 1115 695L1110 715L1095 762M1005 660Q1005 740 1060 748Q1070 710 1065 690M1110 715Q1135 700 1140 725L1125 762M1140 725Q1160 730 1150 762M405 0Q400 40 420 62M420 0L440 30L450 62M510 0Q515 35 495 62M490 5L475 40L465 62M885 10Q885 62 925 62Q960 55 962 10ZM992 5L1000 62M1055 5L1062 62M992 5L1055 5M1160 20L1135 62M1195 0Q1195 40 1175 45M1250 62Q1300 30 1340 45M1335 62Q1355 15 1380 30Q1400 20 1400 5M770 62Q780 15 820 18Q855 30 855 62M730 45L745 30L765 45M640 15L685 0M1475 115L1540 85L1568 75M1480 120Q1530 110 1555 120M1515 250Q1530 225 1568 220M1515 250L1545 255L1530 282L1568 270",
  },
  {
    ox: 0, oy: 290, sx: 3, sy: 3,
    small: [[88,153],[307,236],[346,321],[266,432],[105,445],[187,473],[98,686]],
    mid: [[66,610]],
    large: [[300,156]],
    rings: [[185,307,34],[123,281,4],[232,285,4],[166,372,4]],
    stars: [[184,145,13]],
    d: "M85 298L245 225M100 350L278 265M140 380L287 318M150 215Q110 250 125 290Q120 340 165 372Q185 400 215 405M190 206Q240 240 235 285Q260 340 240 395M33 40L70 25Q85 0 105 5L148 40Q150 50 145 55L95 105L82 100L82 75L35 90M180 20Q170 60 220 90Q270 120 290 80L330 35L345 45L365 25M195 20Q250 60 255 100M365 25Q360 100 380 205Q340 230 350 250Q380 275 415 255M445 65Q460 90 455 150L375 150M460 25Q520 50 550 78M620 25Q610 60 590 90M630 30Q690 60 750 30M800 25L810 60L768 65L790 92M830 50L815 25M830 50L850 45L870 25L868 60L895 65L870 92M33 410L60 420L62 435L35 455M33 495L62 495L62 515L35 535M1110 25Q1110 60 1130 90",
  },
  {
    ox: 0, oy: -140, sx: 2.613, sy: 2.904,
    small: [[428,1048],[262,1125],[622,1135],[1085,1140],[1535,1143],[397,1514],[666,1514],[895,1516]],
    mid: [[799,1050]],
    rings: [[210,1035,12],[210,1035,8],[515,1095,25],[502,1098,20],[922,1140,36],[1208,1120,23]],
    dots: [[898,1084],[915,1080]],
    squares: [[1120,1068,6,10]],
    d: "M100 1065L190 1158M135 1022Q80 1060 90 1100Q120 1150 165 1170M265 1022Q260 1080 195 1158M80 1195Q75 1130 100 1120Q140 1120 135 1160Q130 1190 95 1195M90 1150Q110 1140 110 1165M100 1170L120 1150M320 1060Q315 1090 340 1110Q380 1115 390 1080Q395 1050 385 1030M325 1105L330 1152M385 1100L395 1152M345 1022Q340 1060 350 1065M365 1022Q370 1060 385 1060M320 1060Q330 1030 345 1050M522 1070Q540 1090 542 1105M395 1142L450 1145M672 1150L667 1067L757 1058L735 1088L757 1112L672 1120M1000 1080Q1060 1050 1055 1070Q1050 1100 955 1152M875 1105C880 1160 945 1150 947 1100M1188 1100L1232 1118L1202 1148ZM1290 1130Q1290 1120 1310 1100Q1285 1080 1295 1062Q1315 1055 1320 1070L1342 1085L1302 1135ZM1380 1115Q1375 1050 1430 1048Q1490 1050 1495 1110L1485 1122Q1460 1120 1435 1092Q1420 1125 1380 1115M1383 1120L1385 1152M1485 1120L1485 1150M1430 1022Q1430 1040 1460 1045Q1500 1060 1495 1030L1490 1022M1395 1138L1410 1138M1425 1138L1440 1138M440 1545Q430 1520 460 1525Q465 1505 480 1507Q500 1510 500 1525Q525 1525 522 1550Q510 1570 490 1555Q460 1570 440 1545ZM305 1460Q300 1510 340 1505Q380 1490 400 1460M580 1568Q595 1540 590 1492Q615 1520 605 1560L640 1568Q720 1560 745 1460M797 1568Q790 1500 835 1460M845 1530L870 1568",
  },
  {
    ox: 370, oy: 200, sx: 3, sy: 3,
    small: [[815,145],[1097,162],[704,487],[171,510],[391,541],[580,533],[1118,490],[972,561]],
    mid: [[915,62],[1073,538]],
    large: [[791,518]],
    rings: [[902,548,3]],
    stars: [[1060,80,14]],
    d: "M695 120Q680 90 705 85Q705 65 730 67Q750 65 750 75Q780 70 787 95Q780 115 755 110Q750 125 735 128Q710 145 695 120ZM885 140Q890 175 935 200M885 140L945 155M785 275Q830 200 905 170Q950 140 1020 140Q1045 150 1045 185M790 290Q830 220 910 197Q860 240 800 330M940 180Q1000 170 995 140M800 335Q810 350 830 310Q850 250 900 235M860 370Q850 400 860 450Q900 520 990 515M785 375L802 428L775 400M900 490Q900 515 960 520M920 515L902 545M902 548Q870 590 810 598M10 555Q5 500 30 487M15 560L50 520M125 550Q120 500 95 487M125 550L85 500M195 550L320 505Q330 515 320 525L205 562ZM240 505Q245 490 258 500L275 570M335 600Q345 560 370 565L400 600M475 600Q480 570 510 572L680 585L700 600M625 575Q640 565 670 578M450 545L475 565M483 530L495 555M445 585L470 590",
  },
  {
    ox: 560, oy: 200, sx: 2.24, sy: 3,
    small: [[409,490]],
    d: "M412 38L425 128L490 115M425 38L432 82L508 62L500 38M467 170L495 80L590 130L572 170M482 170L505 98L575 138L565 170M575 38L598 75L605 38M432 545L490 520Q470 515 432 545M445 585L490 545L500 520M485 487Q520 540 535 600M512 487L545 600M540 487L590 590M545 525L570 505M498 540L525 530",
  },
];

const STAR = "M0-1Q.2-.2 .9 0Q.2.2 0 1Q-.2.2-.9 0Q-.2-.2 0-1Z";
const CROSS = "M-4-12Q0-16 4-12L4-4L12-4Q16 0 12 4L4 4L4 12Q0 16-4 12L-4 4L-12 4Q-16 0-12-4L-4-4Z";

function Sheet({ s }) {
  const px = (x) => s.ox + x / s.sx;
  const py = (y) => s.oy + y / s.sy;
  const ring = (list, r) =>
    (list || []).map(([x, y, own], i) => <circle key={`${r}-${i}`} cx={px(x)} cy={py(y)} r={own || r} />);
  return (
    <g>
      <path
        d={s.d}
        vectorEffect="non-scaling-stroke"
        transform={`translate(${s.ox} ${s.oy}) scale(${1 / s.sx} ${1 / s.sy})`}
      />
      {ring(s.small, 4)}
      {ring(s.mid, 7)}
      {ring(s.large, 10)}
      {ring(s.rings, 5)}
      {(s.dots || []).map(([x, y], i) => (
        <circle key={i} cx={px(x)} cy={py(y)} r="2" fill="#25292e" />
      ))}
      {(s.stars || []).map(([x, y, r], i) => (
        <path key={i} d={STAR} vectorEffect="non-scaling-stroke" transform={`translate(${px(x)} ${py(y)}) rotate(8) scale(${r})`} />
      ))}
      {(s.crosses || []).map(([x, y, a], i) => (
        <path key={i} d={CROSS} transform={`translate(${px(x)} ${py(y)}) rotate(${a})`} />
      ))}
      {(s.squares || []).map(([x, y, r, a], i) => (
        <rect key={i} x={-r} y={-r} width={2 * r} height={2 * r} rx="1" transform={`translate(${px(x)} ${py(y)}) rotate(${a})`} />
      ))}
      {(s.pills || []).map(([a, b, y], i) => (
        <rect key={i} x={px(a)} y={py(y) - 5} width={(b - a) / s.sx} height="10" rx="5" />
      ))}
      {(s.texts || []).map(([x, y, t, size, a], i) => (
        <text
          key={i}
          fontSize={size}
          strokeWidth="1.5"
          textAnchor="middle"
          fontFamily="Inter, sans-serif"
          transform={`translate(${px(x)} ${py(y)}) rotate(${a})`}
        >
          {t}
        </text>
      ))}
    </g>
  );
}

function Wallpaper() {
  return (
    <svg aria-hidden="true" className="absolute inset-0 h-full w-full" fill="none" stroke="#25292e" strokeWidth="2" strokeLinejoin="round" strokeLinecap="round">
      <g transform="translate(-12 -196)">
        <g id="doodles">
          {SHEETS.map((s, i) => (
            <Sheet key={i} s={s} />
          ))}
        </g>
        <use href="#doodles" x="-810" />
        <use href="#doodles" x="810" />
        <use href="#doodles" x="-810" y="1440" />
        <use href="#doodles" y="1440" />
        <use href="#doodles" x="810" y="1440" />
      </g>
    </svg>
  );
}

/* ---------- Icons ---------- */

const Checks = ({ className }) => (
  <svg viewBox="0 0 37 23" className={`h-[23px] w-[37px] ${className}`} fill="none" stroke="currentColor" strokeWidth="3" strokeLinecap="round" strokeLinejoin="round">
    <path d="M2 14l7 7L24.500 2M17.500 18.500L19.500 21 35 2" />
  </svg>
);

const NfcIcon = () => (
  <svg viewBox="0 0 24 28" className="h-7 w-6" fill="none" stroke="#fafafa" strokeWidth="3" strokeLinecap="round" strokeLinejoin="round">
    <path d="M7.500 2C0 7 0 21 7.500 26L14.500 17.500C16 15 15.500 12 14.500 11M7.500 2L10.500 5.500" />
    <path d="M16.500 26C24 21 24 7 16.500 2L9.500 10.500C8 13 8.500 16 9.500 17M16.500 26L13.500 22.500" />
  </svg>
);

const BluetoothIcon = () => (
  <svg viewBox="0 0 20 28" className="h-7 w-5" fill="none" stroke="#fafafa" strokeWidth="3" strokeLinejoin="round" strokeLinecap="round">
    <path d="M2.500 7.500L16 20l-5.500 6V2L16 8 2.500 20.500" />
    <path d="M1.800 14h.1M18.200 14h.1" />
  </svg>
);

const WifiIcon = () => (
  <svg viewBox="0 0 35 28" className="h-7 w-[35px]" fill="none" stroke="#fafafa" strokeWidth="3.200" strokeLinecap="round">
    <path d="M2 8.500Q17.500-4.500 33 8.500M6.500 14.500Q17.500 4.500 28.500 14.500M11 19.500Q17.500 13.500 23.500 19" />
    <circle cx="17.500" cy="24" r="3.400" fill="#fafafa" stroke="none" />
    <path d="M28 20.500v7l-3.500-3.500zM30.500 20.500v7l3.500-3.500z" fill="#fafafa" stroke="none" />
  </svg>
);

const ForwardIcon = () => (
  <svg viewBox="0 0 46 32" className="h-8 w-[46px]" fill="none" stroke="#fff" strokeWidth="4.200" strokeLinecap="round" strokeLinejoin="round">
    <path d="M3 29v-5.500Q3 13 13.500 13H32M21.500 3L32.500 13 21.500 24M32 3L43 13 32 24" />
  </svg>
);

const FileIcon = () => (
  <svg viewBox="0 0 46 56" className="h-14 w-[46px] shrink-0" aria-label="XLSX">
    <path d="M6 0H30L46 17V50a6 6 0 0 1-6 6H6a6 6 0 0 1-6-6V6a6 6 0 0 1 6-6z" fill="#468c58" />
    <path d="M30 0L46 17H33a3 3 0 0 1-3-3z" fill="#8cb89a" />
    <path d="M17 25L30 45M30 25L17 45" stroke="#fff" strokeWidth="4" />
  </svg>
);

const PeopleIcon = () => (
  <svg viewBox="0 0 50 37" className="h-[37px] w-[50px]" fill="none" stroke="currentColor" strokeWidth="4.600">
    <circle cx="18" cy="9.500" r="7" />
    <path d="M2.400 34.200V30Q2.500 23.500 18 23.500T33.600 30V34.200Z" strokeLinejoin="round" />
    <g fill="currentColor" stroke="none">
      <path d="M29 0.500C38 -1 42 5 41.500 9.500 41 15.500 35.500 19.500 29 18 33.500 13 33.500 5.500 29 0.500z" />
      <path d="M38 22.500Q50 25.500 50 31.500V34Q50 36.500 47.500 36.500H39.500Q41 34 40.500 30 40 25.500 36 22.200z" />
    </g>
  </svg>
);

const CloseIcon = () => (
  <svg viewBox="0 0 30 30" className="h-[30px] w-[30px]" fill="none" stroke="currentColor" strokeWidth="4" strokeLinecap="round">
    <path d="M2 2l26 26M28 2L2 28" />
  </svg>
);

const StickerIcon = () => (
  <svg viewBox="0 0 46 46" className="h-[46px] w-[46px]" fill="none" stroke="currentColor" strokeWidth="4.200" strokeLinejoin="round" strokeLinecap="round">
    <path d="M17 2.200H29Q43.800 2.200 43.800 17V25Q43.800 29 41 32L32 41Q29 43.800 25 43.800H17Q2.200 43.800 2.200 29V17Q2.200 2.200 17 2.200z" />
    <path d="M25 43V34Q25 25 34 25H43" />
    <g fill="currentColor" stroke="none">
      <circle cx="15" cy="16" r="3.600" />
      <circle cx="31" cy="16" r="3.600" />
      <path d="M12.500 25.500H29Q23.500 28 23.500 34 15 33 12.500 25.500z" />
    </g>
  </svg>
);

const ClipIcon = () => (
  <svg viewBox="0 0 30 46" className="h-[46px] w-[30px]" fill="none" stroke="currentColor" strokeWidth="4.400" strokeLinecap="round">
    <path d="M27.600 12V30.500a12.700 13 0 0 1-25.400 0V12a9 10 0 0 1 18 0V29.500a4.600 5 0 0 1-9.200 0V12" />
  </svg>
);

const CameraIcon = () => (
  <svg viewBox="0 0 46 41" className="h-[41px] w-[46px]" fill="none" stroke="currentColor" strokeWidth="4.200" strokeLinejoin="round">
    <path d="M4.500 7H12L17 2.200H29L34 7H41.500Q43.800 7 43.800 9.500V36.500Q43.800 38.800 41.500 38.800H4.500Q2.200 38.800 2.200 36.500V9.500Q2.200 7 4.500 7z" />
    <circle cx="23" cy="22.500" r="8" />
  </svg>
);

const MicIcon = () => (
  <svg viewBox="0 0 32 44" className="h-11 w-8">
    <rect x="9" y="0" width="14" height="28" rx="7" fill="#0b1014" />
    <path d="M2.500 22.500a13.500 13.500 0 0 0 27 0M16 36.500V42" fill="none" stroke="#0b1014" strokeWidth="4" strokeLinecap="round" />
  </svg>
);

/* ---------- Chat parts ---------- */

function Tail({ out }) {
  return out ? (
    <svg viewBox="0 0 16 25" className="absolute -right-[15px] top-0 h-[25px] w-4 text-[#274c3a]" fill="currentColor" aria-hidden="true">
      <path d="M0 0H12.500Q17.500 0 15 4.500L1 24.500H0z" />
    </svg>
  ) : (
    <svg viewBox="0 0 16 25" className="absolute -left-[15px] top-0 h-[25px] w-4 text-[#23282c]" fill="currentColor" aria-hidden="true">
      <path d="M16 0H3.500Q-1.500 0 1 4.500L15 24.500H16z" />
    </svg>
  );
}

function Time({ out, read, children }) {
  return (
    <span className={`flex items-center gap-2 text-[27px] leading-8 ${out ? "text-[#93a69c]" : "text-[#8f9396]"}`}>
      <time>{children}</time>
      {out && <Checks className={read ? "text-[#6cb6e0]" : "text-[#a0b2a7]"} />}
    </span>
  );
}

function Bubble({ out, read, time, long, first, lines }) {
  const shape = first
    ? "rounded-b-[26px]"
    : out
      ? "rounded-[26px] rounded-tr-none pt-[13px]"
      : "rounded-[26px] rounded-tl-none pt-[13px]";
  return (
    <div className={`flex ${out ? "justify-end" : "justify-start"}`}>
      <div
        className={`relative pb-2 pl-[22px] ${shape} ${out ? "bg-[#274c3a] pr-[18px]" : "bg-[#23282c] pr-5"} ${
          long ? "w-[94%]" : "flex items-end gap-5"
        }`}
      >
        {first ? (
          <svg viewBox="0 0 10 12" className="absolute -left-2 top-0 h-3 w-[9px] text-[#23282c]" fill="currentColor" aria-hidden="true">
            <path d="M0 0H10V12z" />
          </svg>
        ) : (
          <Tail out={out} />
        )}
        <p className="pb-2.5 text-[35px] leading-[42px] text-[#fafafa]">
          {lines.map((line) => (
            <span key={line} className="block w-fit">
              {line}
            </span>
          ))}
        </p>
        <div className={long ? "absolute bottom-2 right-[18px]" : !out ? "pl-2.5" : ""}>
          <Time out={out} read={read}>{time}</Time>
        </div>
      </div>
    </div>
  );
}

export default function App() {
  return (
    <div className="flex min-h-screen flex-col overflow-hidden bg-[#0b1014] font-['Inter','Noto_Sans',sans-serif] text-[#fafafa]">
      <div className="flex h-[72px] shrink-0 items-center justify-end gap-2.5 pr-[31px]">
        <NfcIcon />
        <BluetoothIcon />
        <MdNotificationsOff className="-mx-1 h-8 w-8" />
        <WifiIcon />
        <div className="flex items-center gap-0.5">
          <div className="flex h-[30px] w-[53px] items-center rounded-[9px] border-2 border-[#fafafa] bg-[linear-gradient(90deg,#45494c_78%,transparent_78%)]">
            <span className="w-full text-center text-[24px] font-medium leading-6">74</span>
          </div>
          <span className="h-2.5 w-[3px] rounded-full bg-[#fafafa]" />
        </div>
      </div>

      <div className="ml-[11px] flex flex-1 flex-col border-l border-[#1a1e22]">
        <header className="flex h-[124px] items-center border-b-2 border-[#1a1f23] pl-[27px] pr-[45px] pt-1.5">
          <div className="flex h-20 w-20 items-center justify-center rounded-full bg-[#1c3328] text-[38px] text-[#62c473]">I</div>
          <h1 className="ml-[27px] flex-1 pb-1.5 text-[37px] font-normal leading-[48px]">+62 851-5885-0789</h1>
          <button type="button" aria-label="Panggil" className="flex items-center gap-5">
            <MdOutlineCall className="h-[54px] w-[54px]" />
            <svg viewBox="0 0 18 12" className="h-3 w-[18px]" fill="currentColor">
              <path d="M1.500 0H16.500Q19 1 17.500 3.500L10.500 11Q9 12.500 7.500 11L.5 3.500Q-1 1 1.500 0z" />
            </svg>
          </button>
          <button type="button" aria-label="Menu" className="ml-[47px]">
            <svg viewBox="0 0 10 38" className="h-[38px] w-2.5" fill="currentColor">
              <circle cx="5" cy="5" r="4.700" />
              <circle cx="5" cy="19" r="4.700" />
              <circle cx="5" cy="33" r="4.700" />
            </svg>
          </button>
        </header>

        <div className="relative flex flex-1 flex-col">
          <Wallpaper />

          <main className="relative flex flex-col gap-[23px] pb-[46px] pl-[38px] pr-[38px]">
            <Bubble
              first
              long
              time="11.27"
              lines={[
                "Selamat pagi bu fauziyah, an. Siapa ya bu? Karena saya posisi lagi tidak dikantor",
                "dari pagi biar saya bantu kroscek ke tim yg standby",
              ]}
            />
            <Bubble
              out
              long
              read
              time="11.35"
              lines={[
                "bukan mas bukan debitur janji, tapi debitur yg datang sendiri mas. Kadang",
                "debitur setelah dikasih somasi ada yg langsung ke kantor gitu mas.",
              ]}
            />
            <Bubble time="12.02" lines={["Iya bu atas nama siapa ya?"]} />
            <Bubble out time="12.02" lines={["Kelolaan NGP mas"]} />

            <div className="flex justify-center">
              <span className="rounded-2xl bg-[#14191d] px-5 py-3.5 text-[28px] leading-8 text-[#8f9396]">Hari ini</span>
            </div>

            <div className="flex items-center justify-end gap-[18px]">
              <button type="button" aria-label="Teruskan" className="flex h-[72px] w-[72px] items-center justify-center rounded-full bg-[#11181c]/80">
                <ForwardIcon />
              </button>
              <div className="relative w-[589px] rounded-[26px] rounded-tr-none bg-[#274c3a] px-2.5 pb-2 pt-2.5">
                <Tail out />
                <a href="#file" className="flex h-[168px] items-center gap-[19px] rounded-2xl bg-[#234235] pl-5 pr-4">
                  <FileIcon />
                  <span className="block">
                    <span className="block whitespace-pre-line text-[33px] leading-10">
                      {"DEPOK_LAPORAN_PRO\nGRESS BTN AKTIF PASIF S…"}
                    </span>
                    <span className="mt-3.5 flex gap-3.5 text-[26px] leading-8 text-[#8a9b92]">
                      <span>4 lembar</span>
                      <span>•</span>
                      <span>107 kB</span>
                      <span>•</span>
                      <span>XLSX</span>
                    </span>
                  </span>
                </a>
                <p className="mt-4 whitespace-pre-line pl-[13px] text-[35px] leading-[42px]">
                  {"Selamat Pagi Pak Iqbal, izin\nsaya kirimkan Laporan Progress\nsentuhan debitur Oktober 2025\ndan Prognosa November 2025\nDepok. Penanganan sentuhan\ndebitur akan terus kami\nmaksimalkan Pak. Terimakasih"}
                </p>
                <div className="mt-5 flex justify-end pr-3">
                  <Time out>11.45</Time>
                </div>
              </div>
            </div>
          </main>

          <section className="relative h-[325px] border-t border-[#2a2f33] bg-[#14181c] pt-[30px] text-[33px]">
            <p className="pl-[45px] text-[31px] leading-10 text-[#8f9396]">
              1 kartu kontak ditemukan untuk nomor ini. Tambahkan ke kontak Anda?
            </p>
            <div className="mt-7 flex flex-col text-[#5fbb6e]">
              <button type="button" className="flex h-[108px] items-center gap-[38px] pl-[46px] font-medium">
                <PeopleIcon />
                <span>Lihat kartu kontak</span>
              </button>
              <button type="button" className="flex h-[108px] items-center gap-[38px] pl-[46px] font-medium">
                <span className="flex w-[50px] justify-center">
                  <CloseIcon />
                </span>
                <span>Tidak, terima kasih</span>
              </button>
            </div>
            <div className="absolute right-0 top-[138px] h-[222px] w-[9px] bg-[#54585b]" />
          </section>

          <footer className="relative flex flex-1 items-start gap-6 pb-[34px] pl-[23px] pr-[9px] pt-11">
            <form className="flex h-[105px] flex-1 items-center rounded-full bg-[#23272b] pl-[25px] pr-[29px] text-[#8f9599]">
              <button type="button" aria-label="Stiker">
                <StickerIcon />
              </button>
              <span className="-mr-0.5 ml-[26px] h-[58px] w-1 bg-white" />
              <input
                type="text"
                aria-label="Pesan"
                placeholder="Pesan"
                className="min-w-0 flex-1 bg-transparent text-[37px] leading-[48px] text-white outline-none placeholder:text-[#8f9599]"
              />
              <button type="button" aria-label="Lampirkan">
                <ClipIcon />
              </button>
              <button type="button" aria-label="Kamera" className="ml-[70px]">
                <CameraIcon />
              </button>
            </form>
            <button type="button" aria-label="Rekam suara" className="mt-[3px] flex h-[106px] w-[106px] items-center justify-center rounded-full bg-[#fafafa] shadow-md">
              <MicIcon />
            </button>
          </footer>
        </div>
      </div>
    </div>
  );
}
